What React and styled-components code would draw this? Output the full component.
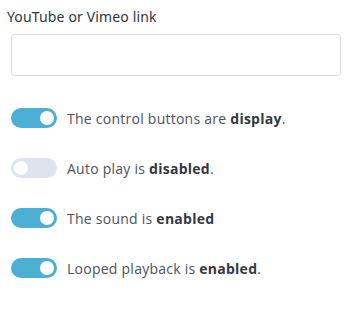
import React, { useState } from "react";
import styled, { createGlobalStyle } from "styled-components";

const Global = createGlobalStyle`
  html, body { margin: 0; padding: 0; background: #fff; }
  body { font-family: "Open Sans", "Noto Sans", sans-serif; }
`;

const Panel = styled.div`
  width: 356px;
  padding: 8px 15px 0 11px;
  box-sizing: border-box;
`;

const Label = styled.div`
  font-family: "Noto Sans", "Open Sans", sans-serif;
  font-size: 14px;
  color: #2f3440;
  line-height: 18px;
  letter-spacing: 0.15px;
  margin-left: -4px;
`;

const Input = styled.input`
  display: block;
  box-sizing: border-box;
  width: 330px;
  height: 42px;
  margin-top: 8px;
  border: 1px solid #dcdcdc;
  border-radius: 3px;
  outline: none;
`;

const List = styled.div`
  display: flex;
  flex-direction: column;
  gap: 30px;
  margin-top: 32px;
`;

const Row = styled.label`
  display: flex;
  align-items: center;
  gap: 10px;
  height: 20px;
  cursor: pointer;
`;

const Track = styled.span`
  position: relative;
  width: 46px;
  height: 20px;
  border-radius: 10px;
  background: ${(p) => (p.$on ? "#4bb0d3" : "#dfe3ee")};
  flex-shrink: 0;
`;

const Knob = styled.span`
  position: absolute;
  top: 3px;
  left: ${(p) => (p.$on ? "29px" : "3px")};
  width: 14px;
  height: 14px;
  border-radius: 50%;
  background: #fff;
`;

const Text = styled.span`
  font-family: "Open Sans", sans-serif;
  font-size: 14px;
  color: #4c5260;
  letter-spacing: 0.25px;
  b { font-weight: 700; color: #35383f; }
`;

const items = [
  { on: true, pre: "The control buttons are ", bold: "display", post: "." },
  { on: false, pre: "Auto play is ", bold: "disabled", post: "." },
  { on: true, pre: "The sound is ", bold: "enabled", post: "" },
  { on: true, pre: "Looped playback is ", bold: "enabled", post: "." },
];

export default function App() {
  const [state, setState] = useState(items.map((i) => i.on));
  return (
    <Panel>
      <Global />
      <Label>YouTube or Vimeo link</Label>
      <Input type="text" />
      <List>
        {items.map((it, i) => (
          <Row key={i} onClick={() => setState((s) => s.map((v, j) => (j === i ? !v : v)))}>
            <Track $on={state[i]}>
              <Knob $on={state[i]} />
            </Track>
            <Text>
              {it.pre}
              <b>{it.bold}</b>
              {it.post}
            </Text>
          </Row>
        ))}
      </List>
    </Panel>
  );
}
